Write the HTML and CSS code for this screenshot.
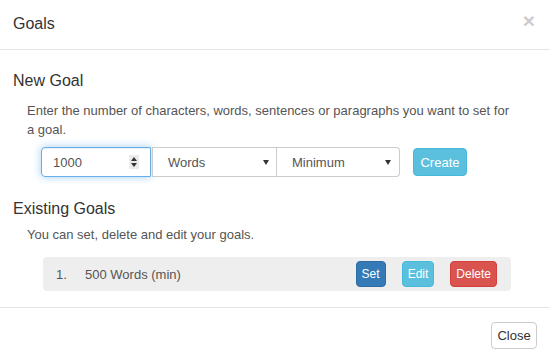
FILE: index.html
```html
<!DOCTYPE html>
<html lang="en">
<head>
    <meta charset="UTF-8">
    <meta name="viewport" content="width=device-width, initial-scale=1.0">
    <title>Goals</title>
    <link rel="stylesheet" href="styles.css">
</head>
<body>
    <div class="modal-header">
        <h4 class="modal-title">Goals</h4>
        <button type="button" class="close">&times;</button>
    </div>

    <div class="modal-body">
        <h4 class="section-title">New Goal</h4>
        <p class="help">Enter the number of characters, words, sentences or paragraphs you want to set for a goal.</p>

        <div class="goal-form">
            <div class="number-box">
                <input type="text" class="number-input" value="1000">
                <span class="spinner">
                    <span class="spin-up"></span>
                    <span class="spin-down"></span>
                </span>
            </div>
            <div class="select-box select-type">
                <span>Words</span>
                <span class="caret"></span>
            </div>
            <div class="select-box select-mode">
                <span>Minimum</span>
                <span class="caret"></span>
            </div>
            <button type="button" class="btn btn-info btn-create">Create</button>
        </div>

        <h4 class="section-title existing">Existing Goals</h4>
        <p class="help help-short">You can set, delete and edit your goals.</p>

        <div class="goal-item">
            <span class="goal-num">1.</span>
            <span class="goal-text">500 Words (min)</span>
            <div class="goal-actions">
                <button type="button" class="btn btn-sm btn-primary">Set</button>
                <button type="button" class="btn btn-sm btn-info">Edit</button>
                <button type="button" class="btn btn-sm btn-danger">Delete</button>
            </div>
        </div>
    </div>

    <div class="modal-footer">
        <button type="button" class="btn btn-default">Close</button>
    </div>
</body>
</html>
```

FILE: styles.css
```css
body {
    margin: 0;
    font-family: "Liberation Sans", Arial, sans-serif;
    font-size: 13px;
    line-height: 19px;
    color: #333;
    background-color: #fff;
}

button {
    font-family: inherit;
}

.modal-header {
    display: flex;
    justify-content: space-between;
    align-items: flex-start;
    padding: 14px 15px 15px 13px;
    border-bottom: 1px solid #e5e5e5;
}

.modal-title,
.section-title {
    margin: 0;
    font-size: 16px;
    font-weight: normal;
    line-height: 20px;
    color: #333;
}

.close {
    margin-top: -4px;
    padding: 0;
    border: none;
    background: none;
    font-size: 21px;
    font-weight: bold;
    line-height: 21px;
    color: #000;
    opacity: 0.2;
    cursor: pointer;
}

.modal-body {
    padding: 21px 13px 16px;
}

.help {
    margin: 10px 25px 8px 14px;
    color: #555;
}

.help-short {
    margin: 6px 25px 13px 14px;
}

.existing {
    margin-top: 22px;
}

/* new goal row */
.goal-form {
    display: flex;
    align-items: center;
    margin-left: 28px;
}

.number-box {
    display: flex;
    align-items: center;
    box-sizing: border-box;
    width: 110px;
    height: 30px;
    border: 1px solid #66afe9;
    border-radius: 4px 0 0 4px;
    box-shadow: inset 0 1px 1px rgba(0, 0, 0, .075), 0 0 8px rgba(102, 175, 233, .6);
}

.number-input {
    flex: 1;
    min-width: 0;
    padding: 0 0 0 11px;
    border: none;
    outline: none;
    background: transparent;
    font-family: inherit;
    font-size: 13px;
    color: #555;
}

.spinner {
    display: flex;
    flex-direction: column;
    justify-content: center;
    align-items: center;
    gap: 2px;
    width: 10px;
    height: 14px;
    margin-right: 11px;
    background-color: #ebebeb;
}

.spin-up {
    border-left: 3px solid transparent;
    border-right: 3px solid transparent;
    border-bottom: 4px solid #333;
}

.spin-down {
    border-left: 3px solid transparent;
    border-right: 3px solid transparent;
    border-top: 4px solid #333;
}

.select-box {
    display: flex;
    align-items: center;
    justify-content: space-between;
    box-sizing: border-box;
    height: 30px;
    padding: 0 7px 0 15px;
    border: 1px solid #ccc;
    background-color: #fff;
    color: #555;
}

.select-type {
    width: 125px;
    margin-left: 1px;
}

.select-mode {
    width: 123px;
    border-left: none;
    border-radius: 0 4px 4px 0;
    padding-right: 8px;
}

.caret {
    border-left: 3px solid transparent;
    border-right: 3px solid transparent;
    border-top: 5px solid #333;
}

/* buttons */
.btn {
    box-sizing: border-box;
    border: 1px solid transparent;
    border-radius: 4px;
    font-size: 13px;
    cursor: pointer;
}

.btn-create {
    width: 54px;
    height: 28px;
    margin-left: 13px;
    padding: 0 4px;
}

.btn-sm {
    padding: 3px 5px;
    font-size: 12px;
    line-height: 18px;
    margin-left: 16px;
}

.btn-primary {
    background-color: #337ab7;
    border-color: #2e6da4;
    color: #fff;
}

.btn-info {
    background-color: #5bc0de;
    border-color: #46b8da;
    color: #fff;
}

.btn-danger {
    background-color: #d9534f;
    border-color: #d43f3a;
    color: #fff;
}

.btn-default {
    width: 46px;
    padding: 3px 0;
    line-height: 19px;
    background-color: #fff;
    border-color: #ccc;
    color: #333;
}

/* existing goals list */
.goal-item {
    display: flex;
    align-items: center;
    height: 34px;
    margin: 0 26px 0 30px;
    padding: 0 14px 0 13px;
    background-color: #eee;
    border-radius: 4px;
    color: #555;
}

.goal-num {
    width: 29px;
}

.goal-actions {
    display: flex;
    margin-left: auto;
}

.modal-footer {
    padding: 14px 13px 13px;
    border-top: 1px solid #e5e5e5;
    text-align: right;
}
```
